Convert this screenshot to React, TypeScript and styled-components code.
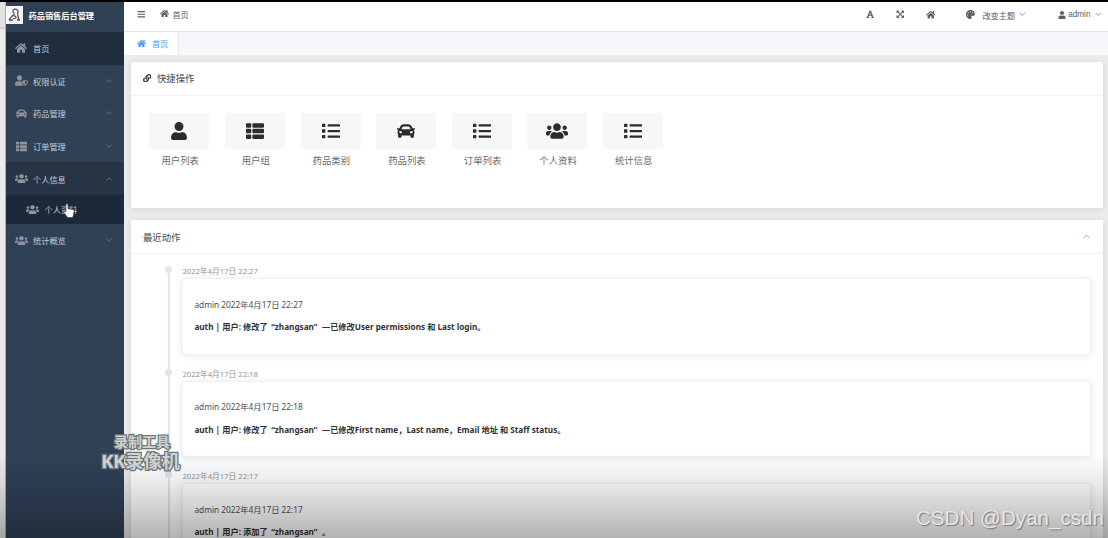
import React from 'react';
import styled, { createGlobalStyle, css } from 'styled-components';
import {
  FaBars, FaCar, FaExpandArrowsAlt, FaFont, FaHome, FaLink, FaList, FaPalette,
  FaThList, FaUser, FaUserShield, FaUsers,
} from 'react-icons/fa';
import type { IconType } from 'react-icons';

const Global = createGlobalStyle`
  *, *::before, *::after { box-sizing: border-box; }
  html, body { margin: 0; padding: 0; overflow: hidden; background: #ececec; }
  body { font-family: "Noto Sans", "Noto Sans CJK SC", sans-serif; color: #303133; }
  svg { display: block; flex: none; }
  p { margin: 0; }
`;

const Screen = styled.div`
  position: relative;
  display: flex;
  width: 1108px;
  height: 538px;
  overflow: hidden;
  border-top: 2px solid #000;
`;

const Edge = styled.div`
  flex: none;
  width: 6px;
  background: linear-gradient(#e2e2e2 0 25px, #d0d0d0 25px 27px, #ebebeb 27px);
  border-right: 1px solid #a9adb2;
`;

const Sidebar = styled.nav`
  flex: none;
  width: 118.4px;
  background: #304156;
  color: #c3ccd7;
`;

const Brand = styled.div`
  display: flex;
  align-items: center;
  height: 30px;
  padding-bottom: 4px;
  gap: 5.5px;
  color: #fff;
  font-size: 8.2px;
  font-weight: 700;
  white-space: nowrap;
`;

const Logo = styled.svg`
  width: 17px;
  height: 18px;
  background: #f6f6f6;
`;

const MenuItem = styled.div<{ $tone?: 'active' | 'open' | 'sub' }>`
  display: flex;
  align-items: center;
  height: 32.6px;
  padding: 0 12.5px 0 8.5px;
  font-size: 8.2px;
  white-space: nowrap;
  ${({ $tone }) => $tone === 'active' && css`background: #1f2d3d;`}
  ${({ $tone }) => $tone === 'open' && css`background: #263445;`}
  ${({ $tone }) => $tone === 'sub' && css`
    height: 28.8px;
    padding-left: 20px;
    background: #1b293a;
  `}
`;

const MenuIcon = styled.span`
  display: flex;
  justify-content: center;
  width: 13px;
  margin-right: 5.5px;
  color: #909399;
`;

const MenuLabel = styled.span`
  flex: 1;
`;

const Page = styled.div`
  flex: 1;
  min-width: 0;
  display: flex;
  flex-direction: column;
`;

const Topbar = styled.header`
  flex: none;
  display: flex;
  align-items: center;
  height: 30px;
  padding: 0 7px 4px 13px;
  background: #fff;
  border-bottom: 1.5px solid #e3e4e8;
  color: #5a5e66;
  font-size: 8.2px;
  white-space: nowrap;
`;

const Crumb = styled.div`
  display: flex;
  align-items: center;
  gap: 3px;
  margin-left: 14.5px;
  margin-top: -2px;
`;

const Tools = styled.div`
  display: flex;
  align-items: center;
  margin-left: auto;
  font-family: "Liberation Sans", "Noto Sans CJK SC", sans-serif;
`;

const Tool = styled.div<{ $before?: number; $gap?: number }>`
  display: flex;
  align-items: center;
  gap: ${({ $gap = 2 }) => $gap}px;
  margin-left: ${({ $before = 0 }) => $before}px;
`;

const Tabs = styled.div`
  flex: none;
  display: flex;
  height: 22.5px;
  background: #f5f7fa;
`;

const Tab = styled.div`
  display: flex;
  align-items: center;
  gap: 6px;
  width: 55px;
  padding-left: 12.5px;
  background: #fff;
  border-right: 1px solid #e4e7ed;
  color: #409eff;
  font-size: 8.2px;
`;

const Main = styled.main`
  flex: 1;
  min-height: 0;
  display: flex;
  flex-direction: column;
  gap: 12.5px;
  padding: 7px 5.5px 0 7px;
  background: #ececec;
`;

const Panel = styled.section<{ $height: number }>`
  flex: none;
  height: ${({ $height }) => $height}px;
  background: #fff;
  border-radius: 2px;
  box-shadow: 0 1px 7px rgba(0, 0, 0, 0.1);
`;

const PanelHead = styled.div`
  display: flex;
  align-items: center;
  height: 34px;
  padding: 0 13px 0 11.5px;
  border-bottom: 1px solid #f1f2f5;
  font-size: 9.4px;
  gap: 5.5px;
`;

const PanelTitle = styled.span`
  flex: 1;
  color: #45474b;
`;

const Shortcuts = styled.div`
  display: flex;
  gap: 15.6px;
  padding: 17.5px 18px 0;
`;

const Shortcut = styled.div`
  width: 60px;
  font-size: 9.4px;
  line-height: 14px;
  color: #6a6a6a;
  text-align: center;
`;

const ShortcutLabel = styled.div`
  padding-left: 1.5px;
`;

const ShortcutIcon = styled.div`
  display: flex;
  align-items: center;
  justify-content: center;
  height: 35.5px;
  margin-bottom: 5.5px;
  background: #f7f7f7;
  color: #2c2c2c;
`;

const Timeline = styled.div`
  padding: 12px 12px 0 34px;
`;

const Entry = styled.article`
  display: flex;
  gap: 10px;
  height: 102.7px;
`;

const Rail = styled.div`
  display: flex;
  flex-direction: column;
  align-items: center;
  width: 7px;
  &::before {
    content: '';
    flex: none;
    width: 7px;
    height: 7px;
    border-radius: 50%;
    background: #e1e4eb;
  }
  &::after {
    content: '';
    flex: 1;
    width: 1.5px;
    background: #e1e4eb;
  }
`;

const EntryBody = styled.div`
  flex: 1;
`;

const Stamp = styled.div`
  height: 12px;
  color: #909399;
  font-size: 7.7px;
  line-height: 10px;
`;

const EntryCard = styled.div`
  height: 76.5px;
  padding: 19.5px 11px 0;
  background: #fff;
  border: 1px solid #f0f1f4;
  border-radius: 2px;
  box-shadow: 0 1px 7px rgba(0, 0, 0, 0.1);
  white-space: nowrap;
`;

const Author = styled.p`
  color: #4c4e52;
  font-size: 8.3px;
  line-height: 12px;
`;

const Change = styled.p`
  margin-top: 10.5px;
  font-size: 8.2px;
  font-weight: 700;
  line-height: 12px;
`;

const Quoted = styled.span`
  padding: 0 4.5px 0 3.5px;
`;

const Shade = styled.div`
  position: absolute;
  inset: auto 0 0 0;
  height: 86px;
  background: linear-gradient(rgba(0, 0, 0, 0), rgba(0, 0, 0, 0.08) 35%, rgba(0, 0, 0, 0.3));
  pointer-events: none;
`;

const RecorderMark = styled.div`
  position: absolute;
  left: 92px;
  top: 431px;
  width: 100px;
  text-align: center;
  color: #cfd2d4;
  font-weight: 700;
  font-size: 14px;
  line-height: 18px;
  white-space: nowrap;
  -webkit-text-stroke: 2.5px #6d7675;
  paint-order: stroke fill;
`;

const RecorderName = styled.div`
  margin-left: -3px;
  font-size: 18.2px;
  line-height: 20px;
`;

const SiteMark = styled.div`
  position: absolute;
  right: 4px;
  bottom: 7px;
  color: #e6e6e6;
  font-family: "Liberation Sans", sans-serif;
  font-size: 20.6px;
  line-height: 26px;
  white-space: nowrap;
  text-shadow: 1px 1px 1px #777;
`;

const Cursor = styled.svg`
  position: absolute;
  left: 63px;
  top: 201px;
  width: 12px;
  height: 15px;
`;

const Chevron = ({ up, color = '#75808e', size = 6 }: { up?: boolean; color?: string; size?: number }) => (
  <svg width={size} height={size} viewBox="0 0 8 8" fill="none" stroke={color} strokeWidth="1.1">
    <path d={up ? 'M.6 5.8 4 2.4l3.4 3.4' : 'M.6 2.2 4 5.6l3.4-3.4'} />
  </svg>
);

type Menu = { icon: IconType; label: string; size: number; tone?: 'active' | 'open' | 'sub'; arrow?: 'up' | 'down' };

const menus: Menu[] = [
  { icon: FaHome, label: '首页', size: 12, tone: 'active' },
  { icon: FaUserShield, label: '权限认证', size: 13, arrow: 'down' },
  { icon: FaCar, label: '药品管理', size: 11, arrow: 'down' },
  { icon: FaThList, label: '订单管理', size: 11, arrow: 'down' },
  { icon: FaUsers, label: '个人信息', size: 13, tone: 'open', arrow: 'up' },
  { icon: FaUsers, label: '个人资料', size: 13, tone: 'sub' },
  { icon: FaUsers, label: '统计概览', size: 13, arrow: 'down' },
];

const shortcuts: { icon: IconType; label: string; size?: number }[] = [
  { icon: FaUser, label: '用户列表' },
  { icon: FaThList, label: '用户组' },
  { icon: FaList, label: '药品类别' },
  { icon: FaCar, label: '药品列表' },
  { icon: FaList, label: '订单列表' },
  { icon: FaUsers, label: '个人资料', size: 22 },
  { icon: FaList, label: '统计信息' },
];

const entries = [
  { time: '2022年4月17日 22:27', action: '修改了', detail: '—已修改User permissions 和 Last login。' },
  { time: '2022年4月17日 22:18', action: '修改了', detail: '—已修改First name，Last name，Email 地址 和 Staff status。' },
  { time: '2022年4月17日 22:17', action: '添加了', detail: '。' },
];

export default function App() {
  return (
    <Screen lang="zh-CN">
      <Global />
      <Edge />
      <Sidebar>
        <Brand>
          <Logo viewBox="0 0 17 18" fill="none" stroke="#555" strokeWidth="1.3">
            <path d="M7 6c-1-3 4-4 5-1 0 2-1 3 0 5l1 4M7 6c2 1 1 3-1 4l-3 4M6 10c2-1 4 0 4 2l-3 1M3 14h4M11 14h3" />
          </Logo>
          药品销售后台管理
        </Brand>
        {menus.map(({ icon: Icon, label, size, tone, arrow }) => (
          <MenuItem key={label} $tone={tone}>
            <MenuIcon><Icon size={size} /></MenuIcon>
            <MenuLabel>{label}</MenuLabel>
            {arrow && <Chevron up={arrow === 'up'} />}
          </MenuItem>
        ))}
      </Sidebar>
      <Page>
        <Topbar>
          <FaBars size={8.5} />
          <Crumb><FaHome size={9} />首页</Crumb>
          <Tools>
            <Tool><FaFont size={8.5} /></Tool>
            <Tool $before={21.5}><FaExpandArrowsAlt size={8.5} /></Tool>
            <Tool $before={21.5}><FaHome size={9.5} /></Tool>
            <Tool $before={30.5} $gap={7.5}><FaPalette size={9} />改变主题</Tool>
            <Tool $before={4}><Chevron color="#85888e" size={6.5} /></Tool>
            <Tool $before={32} $gap={2.5}><FaUser size={8} />admin</Tool>
            <Tool $before={4}><Chevron color="#85888e" size={6.5} /></Tool>
          </Tools>
        </Topbar>
        <Tabs>
          <Tab><FaHome size={9} />首页</Tab>
        </Tabs>
        <Main>
          <Panel $height={146}>
            <PanelHead><FaLink size={8.5} /><PanelTitle>快捷操作</PanelTitle></PanelHead>
            <Shortcuts>
              {shortcuts.map(({ icon: Icon, label, size = 18 }) => (
                <Shortcut key={label}>
                  <ShortcutIcon><Icon size={size} /></ShortcutIcon>
                  <ShortcutLabel>{label}</ShortcutLabel>
                </Shortcut>
              ))}
            </Shortcuts>
          </Panel>
          <Panel $height={400}>
            <PanelHead><PanelTitle>最近动作</PanelTitle><Chevron up color="#6ea8ea" size={7} /></PanelHead>
            <Timeline>
              {entries.map(({ time, action, detail }) => (
                <Entry key={time}>
                  <Rail />
                  <EntryBody>
                    <Stamp>{time}</Stamp>
                    <EntryCard>
                      <Author>admin {time}</Author>
                      <Change>auth | 用户: {action}<Quoted>“zhangsan”</Quoted>{detail}</Change>
                    </EntryCard>
                  </EntryBody>
                </Entry>
              ))}
            </Timeline>
          </Panel>
        </Main>
      </Page>
      <Shade />
      <RecorderMark>录制工具<RecorderName>KK录像机</RecorderName></RecorderMark>
      <SiteMark>CSDN @Dyan_csdn</SiteMark>
      <Cursor viewBox="0 0 12 15" fill="#fff" stroke="#333" strokeWidth=".6">
        <path d="M3 1.7c0-1.2 2-1.2 2 0v4l5 1c1 .2 1.3.8 1.1 1.8l-.8 4.5-1 1.5H4.6L.8 9.6C0 8.2 1.4 7.7 3 9.2z" />
      </Cursor>
    </Screen>
  );
}
